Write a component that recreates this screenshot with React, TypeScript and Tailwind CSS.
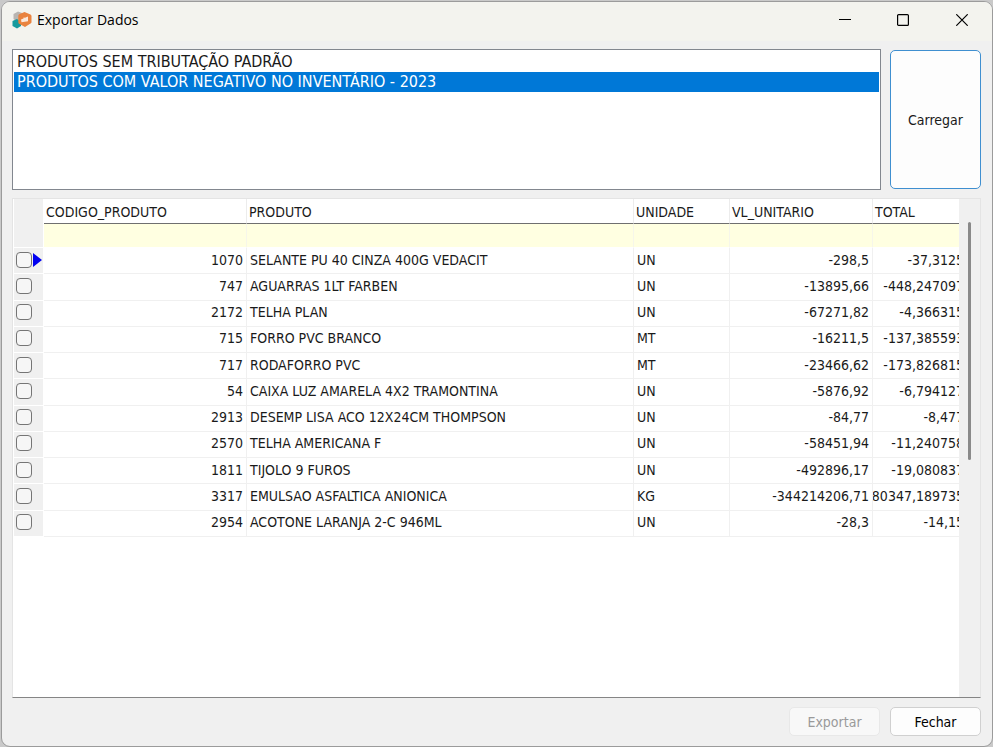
import React, { useState } from 'react';

const CONSULTAS = [
  'PRODUTOS SEM TRIBUTAÇÃO PADRÃO',
  'PRODUTOS COM VALOR NEGATIVO NO INVENTÁRIO - 2023',
];

const PRODUTOS = [
  { codigo: '1070', produto: 'SELANTE PU 40 CINZA 400G VEDACIT', unidade: 'UN', unitario: '-298,5', total: '-37,3125' },
  { codigo: '747', produto: 'AGUARRAS 1LT FARBEN', unidade: 'UN', unitario: '-13895,66', total: '-448,247097' },
  { codigo: '2172', produto: 'TELHA PLAN', unidade: 'UN', unitario: '-67271,82', total: '-4,366315' },
  { codigo: '715', produto: 'FORRO PVC BRANCO', unidade: 'MT', unitario: '-16211,5', total: '-137,385593' },
  { codigo: '717', produto: 'RODAFORRO PVC', unidade: 'MT', unitario: '-23466,62', total: '-173,826815' },
  { codigo: '54', produto: 'CAIXA LUZ AMARELA 4X2 TRAMONTINA', unidade: 'UN', unitario: '-5876,92', total: '-6,794127' },
  { codigo: '2913', produto: 'DESEMP LISA ACO 12X24CM THOMPSON', unidade: 'UN', unitario: '-84,77', total: '-8,477' },
  { codigo: '2570', produto: 'TELHA AMERICANA F', unidade: 'UN', unitario: '-58451,94', total: '-11,240758' },
  { codigo: '1811', produto: 'TIJOLO 9 FUROS', unidade: 'UN', unitario: '-492896,17', total: '-19,080837' },
  { codigo: '3317', produto: 'EMULSAO ASFALTICA ANIONICA', unidade: 'KG', unitario: '-344214206,71', total: '80347,189735' },
  { codigo: '2954', produto: 'ACOTONE LARANJA 2-C 946ML', unidade: 'UN', unitario: '-28,3', total: '-14,15' },
];

const COLUNAS = ['CODIGO_PRODUTO', 'PRODUTO', 'UNIDADE', 'VL_UNITARIO', 'TOTAL'];

const Logo = () => (
  <svg viewBox="0 0 20 18" className="h-[18px] w-5" aria-hidden="true">
    <path d="M6 0.5 L10 2 V9 L5 11 L1.5 8 V3 Z" fill="#b9b5b1" />
    <path d="M0.5 10 L5 8 L9 11 V15 L5 17.5 L0.5 15 Z" fill="#179a9d" />
    <path d="M12.5 1 L18.5 3.5 Q19.5 4 19.5 5 V11 Q19.5 12 18.5 12.6 L13 16 L7 12.8 Q6.3 12.3 6.3 11.3 V4.8 Q6.3 3.8 7.2 3.3 Z" fill="#e9833f" />
    <path d="M9 8.5 L11.5 7.5 V6.5 L13 6.8 L16 5.6 V10.2 L9.5 11.2 Z" fill="#fbe9dc" />
  </svg>
);

const TitleBar = () => (
  <header className="flex h-[39px] items-center bg-[#f3f3ee] pb-[3px] pl-[10px]">
    <Logo />
    <h1 className="ml-[5px] flex-1 font-['Open_Sans','Noto_Sans',sans-serif] text-sm text-black">Exportar Dados</h1>
    <button type="button" aria-label="Minimizar" className="flex h-full w-[58px] items-center justify-center">
      <svg viewBox="0 0 12 12" className="h-3 w-3"><path d="M0 5.5H12" stroke="#000" /></svg>
    </button>
    <button type="button" aria-label="Maximizar" className="flex h-full w-[58px] items-center justify-center">
      <svg viewBox="0 0 12 12" className="h-3 w-3"><rect x="0.6" y="0.6" width="10.8" height="10.8" rx="1" fill="none" stroke="#000" strokeWidth="1.2" /></svg>
    </button>
    <button type="button" aria-label="Fechar janela" className="flex h-full w-[60px] items-center justify-center">
      <svg viewBox="0 0 12 12" className="h-3 w-3"><path d="M0.3 0.3L11.7 11.7M11.7 0.3L0.3 11.7" stroke="#000" strokeWidth="1.2" /></svg>
    </button>
  </header>
);

// A tabela passa um pouco da largura visível, por isso a coluna TOTAL fica cortada
const Tabela = () => (
  <table className="h-[338px] w-[calc(100%+5px)] table-fixed border-separate border-spacing-0 text-sm leading-4">
    <colgroup>
      <col className="w-[30px]" />
      <col className="w-[203px]" />
      <col />
      <col className="w-24" />
      <col className="w-[143px]" />
      <col className="w-[91px]" />
    </colgroup>
    <thead>
      <tr className="h-[25px]">
        <td className="border-r border-white bg-[#f0f0f0]"></td>
        {COLUNAS.map((coluna) => (
          <th key={coluna} scope="col" className="border-r border-b border-r-[#ececec] border-b-[#6f6f6f] px-[2px] pt-px text-left font-normal">
            {coluna}
          </th>
        ))}
      </tr>
      <tr className="h-6">
        <td className="border-r border-b border-white bg-[#f0f0f0]"></td>
        {COLUNAS.map((coluna) => (
          <td key={coluna} className="border-r border-b border-r-[#f6f6ea] border-b-white bg-[#ffffe1]"></td>
        ))}
      </tr>
    </thead>
    <tbody>
      {PRODUTOS.map((item, i) => (
        <tr key={item.codigo}>
          <td className="border-r border-b border-white bg-[#f0f0f0] p-0 pb-[2px]">
            <div className="flex items-center gap-px pl-[2px]">
              <input
                type="checkbox"
                aria-label={`Selecionar ${item.produto}`}
                className="h-4 w-4 shrink-0 appearance-none rounded-[4px] border border-[#757575] bg-[#f6f6f6] checked:bg-[#0078d7]"
              />
              {i === 0 && (
                <svg viewBox="0 0 9 14" className="h-[14px] w-[9px] shrink-0"><path d="M0 0L9 7L0 14Z" fill="#0000f0" /></svg>
              )}
            </div>
          </td>
          <td className="border-r border-b border-[#f0f0f0] px-[3px] pb-[2px] text-right">{item.codigo}</td>
          <td className="border-r border-b border-[#f0f0f0] px-[3px] pb-[2px] whitespace-nowrap">{item.produto}</td>
          <td className="border-r border-b border-[#f0f0f0] px-[3px] pb-[2px]">{item.unidade}</td>
          <td className="border-r border-b border-[#f0f0f0] px-[3px] pb-[2px] text-right">{item.unitario}</td>
          <td className="overflow-hidden border-b border-[#f0f0f0] p-0 pb-[2px]">
            <div className="flex justify-end whitespace-nowrap">{item.total}</div>
          </td>
        </tr>
      ))}
    </tbody>
  </table>
);

export default function App() {
  const [consulta, setConsulta] = useState(1);

  return (
    <div className="flex min-h-screen bg-[#c9c9c9] pt-px pl-px font-['DejaVu_Sans_Condensed','DejaVu_Sans',sans-serif] text-[#1a1a1a]">
      <div className="flex min-w-0 flex-1 flex-col overflow-hidden rounded-[9px] border border-[#9b9b9b] bg-[#f0f0f0]">
        <TitleBar />

        <main className="flex flex-1 flex-col pt-2 pr-[11px] pb-[10px] pl-[10px]">
          <div className="flex gap-[9px]">
            <ul role="listbox" aria-label="Consultas" className="h-[141px] min-w-0 flex-1 border border-[#82878f] bg-white px-px py-[2px] text-base leading-5">
              {CONSULTAS.map((nome, i) => (
                <li
                  key={nome}
                  role="option"
                  aria-selected={i === consulta}
                  onClick={() => setConsulta(i)}
                  className={`px-[3px] whitespace-nowrap ${i === consulta ? 'bg-[#0078d7] text-white' : ''}`}
                >
                  {nome}
                </li>
              ))}
            </ul>
            <button type="button" className="mt-px mb-px w-[91px] rounded-[5px] border border-[#3f8fd0] bg-[#fdfdfd] text-sm">
              Carregar
            </button>
          </div>

          <section className="mt-2 flex flex-1 border border-[#e4e4e4] border-b-[#858585] bg-white pl-px">
            <div className="min-w-0 flex-1 overflow-hidden">
              <Tabela />
            </div>
            <div className="w-[21px] bg-[#f0f0f0] pt-[23px] pl-[9px]">
              <div className="h-[238px] w-[3px] rounded-full bg-[#8a8a8a]"></div>
            </div>
          </section>

          <footer className="mt-[9px] flex justify-end gap-[10px] text-sm">
            <button type="button" disabled className="h-[29px] w-[91px] rounded-[5px] border border-[#e8e8e8] bg-[#f8f8f8] text-[#9a9a9a]">
              Exportar
            </button>
            <button type="button" className="h-[29px] w-[91px] rounded-[5px] border border-[#d0d0d0] bg-[#fdfdfd] text-black">
              Fechar
            </button>
          </footer>
        </main>
      </div>
    </div>
  );
}
